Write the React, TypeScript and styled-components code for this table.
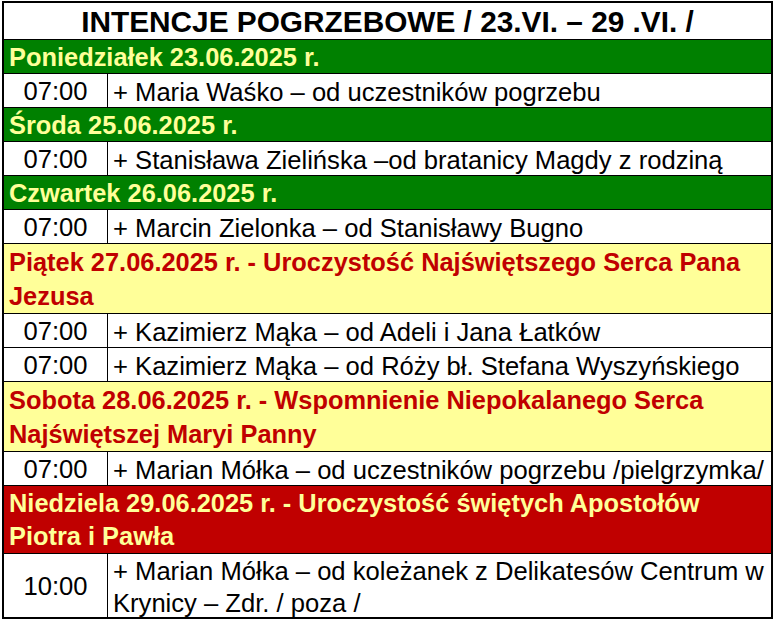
import React, { FunctionComponent } from 'react';
import styled, { createGlobalStyle } from 'styled-components';

const GlobalStyle = createGlobalStyle`
    html, body {
        margin: 0;
        padding: 0;
        background: #ffffff;
    }
    body {
        font-family: "Liberation Sans", Arial, sans-serif;
    }
`;

type Tone = 'green' | 'yellow' | 'red';

const tones: Record<Tone, { bg: string; fg: string }> = {
    green: { bg: '#008000', fg: '#ffff99' },
    yellow: { bg: '#ffff99', fg: '#c00000' },
    red: { bg: '#c00000', fg: '#ffff99' },
};

const Sheet = styled.div`
    box-sizing: border-box;
    width: 771px;
    margin: 1px 0 0 2px;
    border: 2px solid #000;
    display: flex;
    flex-direction: column;
`;

const Title = styled.div`
    height: 36px;
    line-height: 38px;
    border-bottom: 1px solid #000;
    text-align: center;
    font-size: 29.8px;
    font-weight: bold;
    color: #000;
    white-space: nowrap;
    overflow: hidden;
`;

// $height is the full row height, bottom rule included
const DayRow = styled.div<{ $tone: Tone; $height: number; $lines: number }>`
    box-sizing: border-box;
    height: ${p => p.$height}px;
    background: ${p => tones[p.$tone].bg};
    color: ${p => tones[p.$tone].fg};
    border-bottom: 1px solid #000;
    padding: 1px 0 0 5px;
    font-size: 25.4px;
    font-weight: bold;
    line-height: ${p => (p.$height - 2) / p.$lines}px;
    white-space: nowrap;
`;

const EntryRow = styled.div<{ $last?: boolean; $height: number }>`
    box-sizing: border-box;
    display: flex;
    height: ${p => p.$height}px;
    background: #fff;
    border-bottom: ${p => (p.$last ? 'none' : '1px solid #000')};
    font-size: 25.6px;
    color: #000;
`;

const Time = styled.div`
    flex: 0 0 103px;
    border-right: 1px solid #000;
    padding-top: 2px;
    display: flex;
    align-items: center;
    justify-content: center;
`;

const Text = styled.div<{ $lines: number }>`
    flex: 1;
    padding: 2px 0 0 5px;
    display: flex;
    align-items: center;
    line-height: ${p => (p.$lines > 1 ? '32px' : '32px')};
    white-space: nowrap;
`;

type Entry = { time: string; text: React.ReactNode; lines?: number };
type Day = { tone: Tone; title: React.ReactNode; height: number; lines: number; entries: Entry[] };

const days: Day[] = [
    {
        tone: 'green',
        height: 34,
        lines: 1,
        title: 'Poniedziałek 23.06.2025 r.',
        entries: [{ time: '07:00', text: '+ Maria Waśko – od uczestników pogrzebu' }],
    },
    {
        tone: 'green',
        height: 34,
        lines: 1,
        title: 'Środa 25.06.2025 r.',
        entries: [{ time: '07:00', text: '+ Stanisława Zielińska –od bratanicy Magdy z rodziną' }],
    },
    {
        tone: 'green',
        height: 34,
        lines: 1,
        title: 'Czwartek 26.06.2025 r.',
        entries: [{ time: '07:00', text: '+ Marcin Zielonka – od Stanisławy Bugno' }],
    },
    {
        tone: 'yellow',
        height: 70,
        lines: 2,
        title: <>Piątek 27.06.2025 r. - Uroczystość Najświętszego Serca Pana<br />Jezusa</>,
        entries: [
            { time: '07:00', text: '+ Kazimierz Mąka – od Adeli i Jana Łatków' },
            { time: '07:00', text: '+ Kazimierz Mąka – od Róży bł. Stefana Wyszyńskiego' },
        ],
    },
    {
        tone: 'yellow',
        height: 70,
        lines: 2,
        title: <>Sobota 28.06.2025 r. - Wspomnienie Niepokalanego Serca<br />Najświętszej Maryi Panny</>,
        entries: [{ time: '07:00', text: '+ Marian Mółka – od uczestników pogrzebu /pielgrzymka/' }],
    },
    {
        tone: 'red',
        height: 68,
        lines: 2,
        title: <>Niedziela 29.06.2025 r. - Uroczystość świętych Apostołów<br />Piotra i Pawła</>,
        entries: [
            {
                time: '10:00',
                lines: 2,
                text: <span>+ Marian Mółka – od koleżanek z Delikatesów Centrum w<br />Krynicy – Zdr. / poza /</span>,
            },
        ],
    },
];

const App: FunctionComponent = () =>
    <>
        <GlobalStyle />
        <Sheet>
            <Title>INTENCJE POGRZEBOWE / 23.VI. – 29 .VI. /</Title>
            {days.map((day, di) =>
                <React.Fragment key={di}>
                    <DayRow $tone={day.tone} $height={day.height} $lines={day.lines}>{day.title}</DayRow>
                    {day.entries.map((entry, ei) => {
                        const last = di === days.length - 1 && ei === day.entries.length - 1;
                        return (
                            <EntryRow key={ei} $last={last} $height={last ? 63 : 34}>
                                <Time>{entry.time}</Time>
                                <Text $lines={entry.lines ?? 1}>{entry.text}</Text>
                            </EntryRow>
                        );
                    })}
                </React.Fragment>
            )}
        </Sheet>
    </>;

export default App;
